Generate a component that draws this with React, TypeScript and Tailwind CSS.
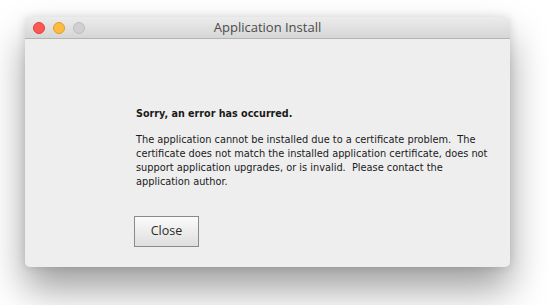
import React from "react";

export default function App() {
  return (
    <div
      className="w-[548px] h-[305px] bg-white pl-[25px] pt-[17px] overflow-hidden"
      style={{ fontFamily: '"Open Sans", "Liberation Sans", sans-serif' }}
    >
      <div className="w-[485px] h-[250px] rounded-[5px] bg-[#eeeeee] shadow-[0_22px_38px_rgba(0,0,0,0.38),0_0_10px_rgba(0,0,0,0.12)] flex flex-col overflow-hidden">
        <div className="relative h-[22px] flex items-center justify-center bg-gradient-to-b from-[#ececec] to-[#d6d6d6] border-b border-[#b4b4b4]">
          <div className="absolute left-[8px] top-[4.5px] flex gap-[8px]">
            <div className="w-[12px] h-[12px] rounded-full bg-[#fc5753] border border-[#df3e3a]" />
            <div className="w-[12px] h-[12px] rounded-full bg-[#fdbc40] border border-[#de9f27]" />
            <div className="w-[12px] h-[12px] rounded-full bg-[#d0d0d0] border border-[#bdbdbd]" />
          </div>
          <span className="text-[13px] text-[#4b4b4b] leading-none">Application Install</span>
        </div>
        <div
          className="flex-1 pl-[111px] pt-[68px] text-[#1a1a1a]"
          style={{ fontFamily: '"DejaVu Sans", sans-serif' }}
        >
          <div className="text-[9.6px] font-bold leading-[14px]">Sorry, an error has occurred.</div>
          <div className="mt-[12px] text-[9.8px] leading-[14px] whitespace-pre">
            {"The application cannot be installed due to a certificate problem.  The\ncertificate does not match the installed application certificate, does not\nsupport application upgrades, or is invalid.  Please contact the\napplication author."}
          </div>
          <button
            className="mt-[27px] -ml-[2px] w-[65px] h-[31px] border border-[#8a8a8a] bg-gradient-to-b from-[#fbfbfb] to-[#dedede] text-[12.5px] text-[#2a2a2a] flex items-center justify-center"
            style={{ fontFamily: '"Open Sans", sans-serif' }}
          >
            Close
          </button>
        </div>
      </div>
    </div>
  );
}
